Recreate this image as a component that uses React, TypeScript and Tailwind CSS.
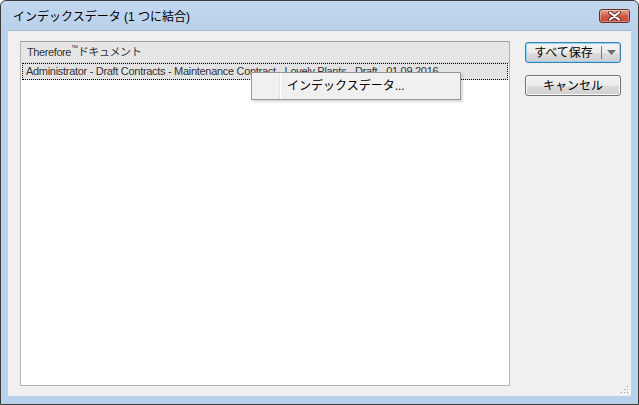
const font = { fontFamily: '"Liberation Sans", "Noto Sans CJK JP", sans-serif' };

const CloseButton = () => (
  <div className="w-[31px] h-[14px] rounded-[3px] border border-[#6b2b22] bg-gradient-to-b from-[#e8a493] via-[#cf5b46] to-[#c44a36] flex items-center justify-center shadow-[inset_0_0_0_1px_rgba(255,255,255,0.35)]">
    <svg width="13" height="10" viewBox="0 0 13 10">
      <path d="M2 1.5 L11 8.5 M11 1.5 L2 8.5" stroke="#5a2a24" strokeWidth="4" strokeLinecap="round" />
      <path d="M2 1.5 L11 8.5 M11 1.5 L2 8.5" stroke="#ffffff" strokeWidth="2.2" strokeLinecap="round" />
    </svg>
  </div>
);

const Grip = () => (
  <svg width="8" height="8" viewBox="0 0 8 8" className="absolute right-[2px] bottom-[2px]">
    {[
      [6, 0],
      [3, 3],
      [6, 3],
      [0, 6],
      [3, 6],
      [6, 6],
    ].map(([x, y], i) => (
      <g key={i}>
        <rect x={x + 1} y={y + 1} width="1" height="1" fill="#ffffff" />
        <rect x={x} y={y} width="1" height="1" fill="#9a9a9a" />
      </g>
    ))}
  </svg>
);

const WinButton = ({ label, primary, split }: { label: string; primary?: boolean; split?: boolean }) => (
  <div
    className={`h-[21px] w-[96px] rounded-[3px] border flex items-stretch text-[12px] text-black ${
      primary ? "border-[#3c7fb1] shadow-[inset_0_0_0_1px_#8fd4f5]" : "border-[#707070] shadow-[inset_0_0_0_1px_#fbfbfb]"
    } bg-[linear-gradient(to_bottom,#f2f2f2_0%,#ebebeb_50%,#dddddd_51%,#cfcfcf_100%)]`}
  >
    <div className="flex-1 flex items-center justify-center leading-none">{label}</div>
    {split && (
      <div className="w-[19px] flex items-center justify-center border-l border-[#7a7a7a] my-[3px]">
        <svg width="9" height="5" viewBox="0 0 9 5">
          <path d="M0 0 H9 L4.5 5 Z" fill="#6d6d6d" />
        </svg>
      </div>
    )}
  </div>
);

export default function App() {
  return (
    <div className="w-[639px] h-[405px] bg-white relative overflow-hidden" style={font}>
      <div className="w-[639px] h-[405px] rounded-t-[6px] border border-[#3b3b3b] bg-[#b9d1ea] flex flex-col">
        {/* title bar */}
        <div className="h-[29px] flex items-start justify-between bg-gradient-to-b from-[#c4d8ef] to-[#b9d1ea] rounded-t-[6px]">
          <div className="pl-[12px] pt-[9px] text-[12px] leading-[14px] text-black">インデックスデータ (1 つに結合)</div>
          <div className="pt-[8px] pr-[8px]">
            <CloseButton />
          </div>
        </div>
        {/* client */}
        <div className="relative mx-[7px] mb-[8px] flex-1 bg-[#f0f0f0] border-t border-[#a8bcd4] flex">
          <div className="ml-[12px] mt-[10px] mb-[10px] w-[490px] border border-[#b4b4b4] border-t-[#a0a0a0] bg-white flex flex-col">
            <div className="h-[21px] bg-[#e6e6e6] border-b border-[#d2d2d2] flex items-center pl-[6px] text-[11px] tracking-[-0.4px] text-[#333]">
              Therefore<sup className="text-[7px] -top-[4px]">™</sup> ドキュメント
            </div>
            <div className="h-[17px] mx-[1px] bg-[#e3e3e3] border border-dotted border-black flex items-center pl-[3px] text-[11px] tracking-[-0.3px] text-[#333] whitespace-nowrap overflow-hidden">
              Administrator - Draft Contracts - Maintenance Contract - Lovely Plants - Draft - 01.09.2016
            </div>
          </div>
          <div className="ml-[15px] mt-[11px] flex flex-col gap-[12px]">
            <WinButton label="すべて保存" primary split />
            <WinButton label="キャンセル" />
          </div>
          <Grip />
        </div>
      </div>
      {/* context menu */}
      <div className="absolute left-[251px] top-[72px] w-[210px] h-[28px] border border-[#979797] bg-[#f0f0f0] shadow-[2px_2px_2px_rgba(0,0,0,0.15)] flex items-center">
        <div className="w-[28px] h-full border-r border-[#e2e3e3] shadow-[1px_0_0_#ffffff]" />
        <div className="pl-[7px] text-[12px] text-black">インデックスデータ...</div>
      </div>
    </div>
  );
}
